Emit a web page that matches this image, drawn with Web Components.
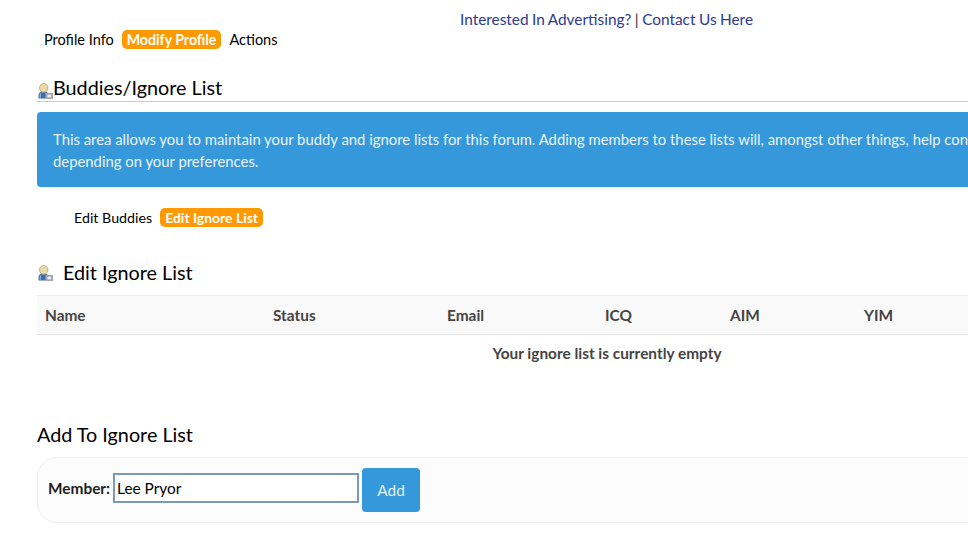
<!DOCTYPE html>
<html>
<head>
<meta charset="utf-8">
<title>Edit Ignore List</title>
<style>
  html, body { margin: 0; padding: 0; overflow: hidden; height: 543px; background: #fff; }
  body { font-family: Lato, "Open Sans", sans-serif; color: #000; }
  #page { width: 1140px; margin-left: 37px; }
</style>
</head>
<body>
<div id="page">
  <ad-banner></ad-banner>
  <pill-nav style="--nav-pad: 7px; --pill-size: 14.5px; --pill-active-size: 14.15px;">
    <pill-link>Profile Info</pill-link>
    <pill-link active>Modify Profile</pill-link>
    <pill-link>Actions</pill-link>
  </pill-nav>
  <page-title>Buddies/Ignore List</page-title>
  <info-box>This area allows you to maintain your buddy and ignore lists for this forum. Adding members to these lists will, amongst other things, help control what you see<br>depending on your preferences.</info-box>
  <pill-nav style="--nav-pad: 37px; --nav-top: 21px; --pill-size: 14.25px; --pill-active-size: 13.95px;">
    <pill-link>Edit Buddies</pill-link>
    <pill-link active>Edit Ignore List</pill-link>
  </pill-nav>
  <sub-title>Edit Ignore List</sub-title>
  <ignore-table></ignore-table>
  <add-form></add-form>
</div>

<script>
  class UserIcon extends HTMLElement {
    constructor() {
      super();
      this.attachShadow({ mode: 'open' });
      this.shadowRoot.innerHTML = `
        <style>
          :host { display: inline-block; width: 15px; height: 16px; flex: none; }
          svg { display: block; }
        </style>
        <svg width="15" height="16" viewBox="0 0 15 16">
          <path d="M0.5 15.5v-3.6C.5 9.8 2.3 9 4 8.7h3.4c1.8.3 3.3 1.1 3.3 3.2v3.6z" fill="#3f6fa6"/>
          <path d="M1.6 15.5v-3.6c0-1 .6-1.7 1.7-2l-.5 5.6z" fill="#8aaed4"/>
          <ellipse cx="5.7" cy="4.9" rx="4.2" ry="4.4" fill="#ecd9a6" stroke="#b5a478" stroke-width=".8"/>
          <rect x="7.5" y="10" width="7.5" height="6" fill="#a3a9af"/>
          <rect x="9.5" y="11.8" width="3.5" height="2.4" fill="#eef0f2"/>
        </svg>
      `;
    }
  }
  customElements.define('user-icon', UserIcon);

  class AdBanner extends HTMLElement {
    constructor() {
      super();
      this.attachShadow({ mode: 'open' });
      this.shadowRoot.innerHTML = `
        <style>
          :host { display: block; padding: 9px 0 0 423px; height: 21px; font-size: 15.4px; line-height: 21px; word-spacing: -0.5px; color: #333; }
          a { color: #2e3a91; text-decoration: none; }
        </style>
        <a href="#">Interested In Advertising?</a> | <a href="#">Contact Us Here</a>
      `;
    }
  }
  customElements.define('ad-banner', AdBanner);

  class PillNav extends HTMLElement {
    constructor() {
      super();
      this.attachShadow({ mode: 'open' });
      this.shadowRoot.innerHTML = `
        <style>
          :host { display: flex; gap: 8px; height: 19px; padding-left: var(--nav-pad, 0); margin-top: var(--nav-top, 0); }
        </style>
        <slot></slot>
      `;
    }
  }
  customElements.define('pill-nav', PillNav);

  class PillLink extends HTMLElement {
    constructor() {
      super();
      this.attachShadow({ mode: 'open' });
      this.shadowRoot.innerHTML = `
        <style>
          :host { display: block; font-size: var(--pill-size, 14.4px); line-height: 19px; height: 19px; white-space: nowrap; }
          :host([active]) { background: #ff9900; color: #fff; font-size: var(--pill-active-size, 14px); font-weight: 700; border-radius: 5px; padding: 0 5px; }
        </style>
        <slot></slot>
      `;
    }
  }
  customElements.define('pill-link', PillLink);

  class PageTitle extends HTMLElement {
    constructor() {
      super();
      this.attachShadow({ mode: 'open' });
      this.shadowRoot.innerHTML = `
        <style>
          :host { display: flex; align-items: flex-end; margin-top: 26px; height: 26px; border-bottom: 1px solid #ccc; font-size: 19.8px; line-height: 25px; color: #000; }
          user-icon { margin: 0 0 2px 1px; }
          span { display: block; padding-bottom: 1px; }
        </style>
        <user-icon></user-icon><span><slot></slot></span>
      `;
    }
  }
  customElements.define('page-title', PageTitle);

  class InfoBox extends HTMLElement {
    constructor() {
      super();
      this.attachShadow({ mode: 'open' });
      this.shadowRoot.innerHTML = `
        <style>
          :host { display: block; margin-top: 10px; box-sizing: border-box; height: 75px; padding: 16px; background: #3498db; color: #eaf4fc; border-radius: 4px; font-size: 14.85px; line-height: 22px; white-space: nowrap; }
        </style>
        <slot></slot>
      `;
    }
  }
  customElements.define('info-box', InfoBox);

  class SubTitle extends HTMLElement {
    constructor() {
      super();
      this.attachShadow({ mode: 'open' });
      this.shadowRoot.innerHTML = `
        <style>
          :host { display: flex; align-items: center; gap: 10px; margin-top: 33px; height: 25px; padding-left: 1px; font-size: 19.8px; line-height: 25px; }
        </style>
        <user-icon></user-icon><slot></slot>
      `;
    }
  }
  customElements.define('sub-title', SubTitle);

  class IgnoreTable extends HTMLElement {
    constructor() {
      super();
      this.attachShadow({ mode: 'open' });
      this.shadowRoot.innerHTML = `
        <style>
          :host { display: block; margin-top: 10px; font-size: 15.4px; color: #444; }
          table { width: 1140px; border-collapse: collapse; table-layout: fixed; }
          th { height: 39px; padding: 0 8px; box-sizing: border-box; text-align: left; font-weight: 700; background: #f9f9f9; border-top: 1px solid #eee; border-bottom: 1px solid #e6e6e6; }
          td { height: 36px; padding: 0 8px; text-align: center; font-weight: 700; }
        </style>
        <table>
          <colgroup>
            <col style="width:228px"><col style="width:174px"><col style="width:158px">
            <col style="width:125px"><col style="width:134px"><col>
          </colgroup>
          <thead>
            <tr><th>Name</th><th>Status</th><th>Email</th><th>ICQ</th><th>AIM</th><th>YIM</th></tr>
          </thead>
          <tbody>
            <tr><td colspan="6">Your ignore list is currently empty</td></tr>
          </tbody>
        </table>
      `;
    }
  }
  customElements.define('ignore-table', IgnoreTable);

  class AddForm extends HTMLElement {
    constructor() {
      super();
      this.attachShadow({ mode: 'open' });
      this.shadowRoot.innerHTML = `
        <style>
          :host { display: block; margin-top: 51px; }
          h3 { margin: 0; font-size: 19.8px; font-weight: 400; line-height: 25px; color: #000; }
          form { display: flex; align-items: center; box-sizing: border-box; height: 66px; margin-top: 10px; padding: 0 10px; background: #fcfcfc; border: 1px solid #f0f0f0; border-radius: 20px; }
          label { font-size: 15.4px; font-weight: 700; color: #222; margin: 0 3px 4px 0; }
          input { box-sizing: border-box; width: 246px; height: 30px; margin-bottom: 4px; padding: 0 2px; border: 2px solid #7a9ab8; font: 15.4px Lato, sans-serif; color: #000; background: #fff; outline: none; }
          button { box-sizing: border-box; width: 58px; height: 44px; margin-left: 3px; border: 0; border-radius: 4px; background: #3498db; color: #e6f2fb; font: 15.4px Lato, sans-serif; }
        </style>
        <h3>Add To Ignore List</h3>
        <form>
          <label>Member:</label>
          <input type="text" value="Lee Pryor">
          <button type="button">Add</button>
        </form>
      `;
    }
  }
  customElements.define('add-form', AddForm);
</script>
</body>
</html>
